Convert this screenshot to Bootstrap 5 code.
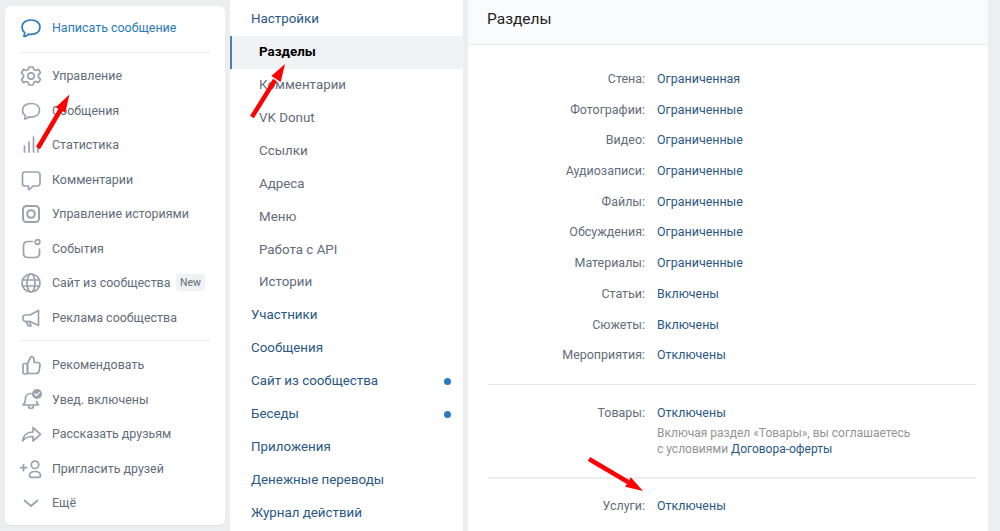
<!DOCTYPE html>
<html lang="ru"><head><meta charset="utf-8">
<link href="https://cdn.jsdelivr.net/npm/bootstrap@5.3.0/dist/css/bootstrap.min.css" rel="stylesheet">
<script src="https://cdn.jsdelivr.net/npm/bootstrap@5.3.0/dist/js/bootstrap.bundle.min.js"></script>
<style>
html,body{height:531px;overflow:hidden}
body{background:#edeef0;font-family:Roboto,"Liberation Sans",sans-serif;font-size:12.45px;line-height:16px;color:#2a5885}
.shell{height:531px;overflow:hidden;position:relative}
.side-card{width:220px;height:519px;margin:6px 5px 0;background:#fff;border-radius:6px;box-shadow:0 1px 1px #dfe1e5;padding:5px 14px 0 14px;flex:none}
.side-row{height:34.5px;color:#626d7a;display:flex;align-items:center;white-space:nowrap}
.side-row svg{width:24px;height:24px;margin-right:9px;flex:none;fill:none;stroke:#99a2ad;stroke-width:1.7;stroke-linecap:round;stroke-linejoin:round}
.side-row.blue{color:#2a7ab8;height:34px}
.side-row.blue svg{stroke:#2b7bc0}
.side-rule{height:1px;background:#eceef1;margin:7px 0 6px}
.side-rule.later{margin:5px 0 7px}
.new-tag{background:#eff1f4;color:#626d7a;font-size:10.5px;border-radius:3px;padding:0 4.5px;line-height:17px;margin-left:5px;margin-top:-2px}
.mid-panel{width:233px;background:#fff;flex:none;height:531px;padding-top:3px;font-size:13.35px}
.mid-row{height:32.95px;display:flex;align-items:center;padding:0 12px 1px 21px;color:#2a5885;justify-content:space-between}
.mid-row.sub{padding-left:29px;color:#626d7a}
.mid-row.on{background:#f0f2f5;color:#000;font-weight:700;box-shadow:inset 2px 0 0 #4a7fb0}
.blue-dot{width:7px;height:7px;border-radius:50%;background:#2b7bc0}
.main-panel{width:520px;height:531px;margin-left:5px;background:#fff;flex:none}
.main-head{height:45px;background:#fafbfc;border-bottom:1px solid #e7e8ec;padding:10px 0 0 19px;font-size:15.5px;line-height:18px;color:#222}
.main-body{padding:18.5px 12px 0 20px}
.set-row{height:30.72px;display:flex;align-items:center}
.set-row.first{margin-top:10.5px;padding-top:4px}
.set-row.last{margin-top:9.5px;padding-top:4px}
.set-label{width:157px;text-align:right;color:#626d7a;flex:none}
.set-value{margin-left:12px}
.main-rule{height:1px;background:#e7e8ec;margin-top:13px}
.main-rule.tall{margin-top:20.5px;height:2px;background:#edeef0}
.note{margin-left:169px;margin-top:-1px;color:#939393;font-size:12px;line-height:16px}
.note a{color:#2a5885;text-decoration:none}
.red-arrows{position:absolute;left:0;top:0;width:1000px;height:531px;pointer-events:none}
</style></head>
<body>
<div class="shell d-flex">
 <div class="side-card">
  <div class="side-row blue"><svg viewBox="0 0 24 24"><path d="M12 4c5.500 0 9 3 9 7.200s-3.500 7.200-9 7.200c-1 0-1.600 0-2.500-.2-1 1-2.700 2.300-4 2.300-.6 0-.7-.4-.5-.8.4-.8.8-2 .7-3C3.900 15.100 3 13.300 3 11.200 3 7 6.500 4 12 4z"/></svg>Написать сообщение</div>
  <div class="side-rule"></div>
  <div class="side-row"><svg viewBox="0 0 24 24"><path d="M10 3h4l.8 2.500 2.300 1 2.400-1.200 2 3.400-2 1.800v2.900l2 1.800-2 3.400-2.400-1.200-2.300 1L14 21h-4l-.8-2.500-2.300-1-2.400 1.200-2-3.400 2-1.800V11.500L2.500 8.700l2-3.400 2.400 1.200 2.300-1z"/><circle cx="12" cy="12" r="3.200"/></svg>Управление</div>
  <div class="side-row"><svg viewBox="0 0 24 24"><path d="M12 4.500c5.300 0 8.500 2.900 8.500 6.800s-3.200 6.800-8.500 6.800c-.9 0-1.500 0-2.300-.2-.9.9-2.300 2.100-3.500 2.100-.5 0-.7-.3-.4-.7.4-.7.7-1.800.6-2.700C4.400 15.300 3.500 13.500 3.500 11.300c0-3.900 3.200-6.800 8.500-6.800z"/></svg>Сообщения</div>
  <div class="side-row"><svg viewBox="0 0 24 24"><path d="M5.500 13v6M10 9v10M14.500 4v15M19 11v8"/></svg>Статистика</div>
  <div class="side-row"><svg viewBox="0 0 24 24"><path d="M6 4h12.500A2.500 2.500 0 0 1 21 6.500v9a2.500 2.500 0 0 1-2.500 2.500H14l-3.500 3.500c-.4.400-1 .1-1-.4V18H6a2.500 2.500 0 0 1-2.500-2.500v-9A2.500 2.500 0 0 1 6 4z"/></svg>Комментарии</div>
  <div class="side-row"><svg viewBox="0 0 24 24"><rect x="4" y="4" width="16" height="16" rx="3.500" stroke-width="2"/><circle cx="12" cy="12" r="3.800" stroke-width="2"/></svg>Управление историями</div>
  <div class="side-row"><svg viewBox="0 0 24 24"><path d="M13.500 4.500H9C6 4.500 4.500 6 4.500 9v7c0 3 1.500 4.500 4.500 4.500h7c3 0 4.500-1.500 4.500-4.500v-4"/><circle cx="18.500" cy="5" r="2.300"/></svg>События</div>
  <div class="side-row"><svg viewBox="0 0 24 24"><circle cx="12" cy="12" r="9"/><ellipse cx="12" cy="12" rx="4" ry="9"/><path d="M3.500 9h17M3.500 15h17"/></svg>Сайт из сообщества<span class="new-tag">New</span></div>
  <div class="side-row"><svg viewBox="0 0 24 24"><path d="M19.500 4.500v15L11 15.500H6.500A2.500 2.500 0 0 1 4 13v-2.500A2.500 2.500 0 0 1 6.500 9H11z"/><path d="M7 15.500l2.500 4.500h2.500l-1.500-4.500"/></svg>Реклама сообщества</div>
  <div class="side-rule later"></div>
  <div class="side-row"><svg viewBox="0 0 24 24"><path d="M8.500 10.500 12 3.500c1.800 0 3 1.200 3 3v3h3.500c1.700 0 2.800 1.300 2.500 3l-1 5.500c-.3 1.600-1.500 2.500-3 2.500H8.500z"/><rect x="4" y="10.500" width="4.500" height="10.500" rx="1.500"/></svg>Рекомендовать</div>
  <div class="side-row"><svg viewBox="0 0 24 24"><path d="M12 5.500c-3.500 0-5.500 2.500-5.500 5.500 0 3-.8 4.500-2.500 6h15.500c-1-1-1.700-2-2-3.500"/><path d="M9.500 17.500c0 1.700 1 3 2.500 3s2.500-1.300 2.500-3"/><circle cx="18" cy="6" r="5" fill="#99a2ad" stroke="none"/><path d="M15.800 6l1.600 1.600 2.800-3" stroke="#fff" stroke-width="1.300"/></svg>Увед. включены</div>
  <div class="side-row"><svg viewBox="0 0 24 24"><path d="M14 5.500V10C8 10 4.500 13 3.500 19c2.500-3 5.500-4.500 10.500-4.500v4.500l7.500-6.700z"/></svg>Рассказать друзьям</div>
  <div class="side-row"><svg viewBox="0 0 24 24"><circle cx="16" cy="7.800" r="3.700"/><path d="M10.500 18.500c0-2.500 2.300-4 5.500-4s5.500 1.500 5.500 4c0 1.200-.8 1.800-2 1.800h-7c-1.200 0-2-.6-2-1.800zM1.500 10.700h6M4.500 7.700v6"/></svg>Пригласить друзей</div>
  <div class="side-row"><svg viewBox="0 0 24 24"><path d="M5.500 9.500l6.500 5.500 6.500-5.500"/></svg>Ещё</div>
 </div>
 <div class="mid-panel">
  <div class="mid-row">Настройки</div>
  <div class="mid-row sub on">Разделы</div>
  <div class="mid-row sub">Комментарии</div>
  <div class="mid-row sub">VK Donut</div>
  <div class="mid-row sub">Ссылки</div>
  <div class="mid-row sub">Адреса</div>
  <div class="mid-row sub">Меню</div>
  <div class="mid-row sub">Работа с API</div>
  <div class="mid-row sub">Истории</div>
  <div class="mid-row">Участники</div>
  <div class="mid-row">Сообщения</div>
  <div class="mid-row">Сайт из сообщества<span class="blue-dot"></span></div>
  <div class="mid-row">Беседы<span class="blue-dot"></span></div>
  <div class="mid-row">Приложения</div>
  <div class="mid-row">Денежные переводы</div>
  <div class="mid-row">Журнал действий</div>
 </div>
 <div class="main-panel">
  <div class="main-head">Разделы</div>
  <div class="main-body">
   <div class="set-row"><div class="set-label">Стена:</div><div class="set-value">Ограниченная</div></div>
   <div class="set-row"><div class="set-label">Фотографии:</div><div class="set-value">Ограниченные</div></div>
   <div class="set-row"><div class="set-label">Видео:</div><div class="set-value">Ограниченные</div></div>
   <div class="set-row"><div class="set-label">Аудиозаписи:</div><div class="set-value">Ограниченные</div></div>
   <div class="set-row"><div class="set-label">Файлы:</div><div class="set-value">Ограниченные</div></div>
   <div class="set-row"><div class="set-label">Обсуждения:</div><div class="set-value">Ограниченные</div></div>
   <div class="set-row"><div class="set-label">Материалы:</div><div class="set-value">Ограниченные</div></div>
   <div class="set-row"><div class="set-label">Статьи:</div><div class="set-value">Включены</div></div>
   <div class="set-row"><div class="set-label">Сюжеты:</div><div class="set-value">Включены</div></div>
   <div class="set-row"><div class="set-label">Мероприятия:</div><div class="set-value">Отключены</div></div>
   <div class="main-rule"></div>
   <div class="set-row first"><div class="set-label">Товары:</div><div class="set-value">Отключены</div></div>
   <div class="note">Включая раздел «Товары», вы соглашаетесь<br>с условиями <a href="#">Договора-оферты</a></div>
   <div class="main-rule tall"></div>
   <div class="set-row last"><div class="set-label">Услуги:</div><div class="set-value">Отключены</div></div>
  </div>
 </div>
 <svg class="red-arrows" viewBox="0 0 1000 531"><g fill="#fe0000" stroke="#fe0000" stroke-width="4.500">
  <line x1="38" y1="148" x2="61" y2="109"/><polygon stroke="none" points="69.500,94.500 65.200,112.800 55.800,107.200"/>
  <line x1="252" y1="117" x2="275" y2="80"/><polygon stroke="none" points="285,64 280.700,81.900 271.300,76.100"/>
  <line x1="589" y1="459" x2="628" y2="482"/><polygon stroke="none" points="643,491 625.200,486.700 630.800,477.300"/>
 </g></svg>
</div>
</body></html>
